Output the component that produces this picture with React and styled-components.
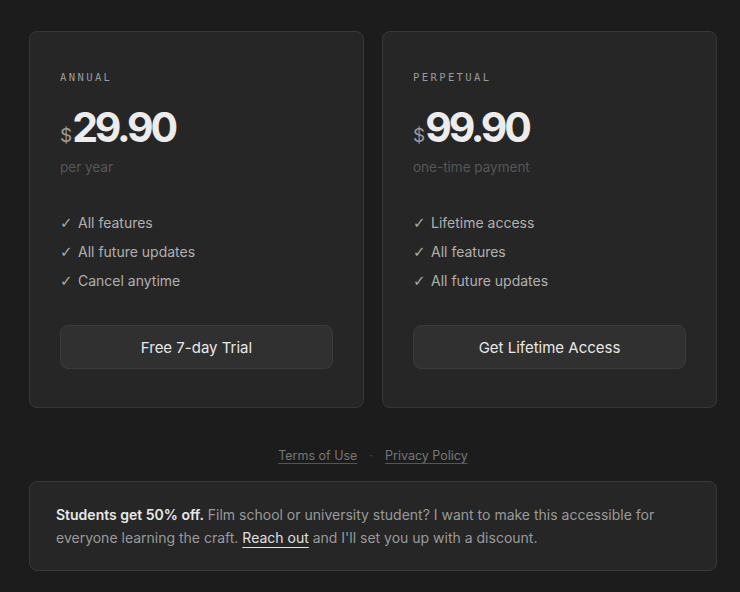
import styled, { createGlobalStyle } from "styled-components";

const GlobalStyle = createGlobalStyle`
  html, body {
    margin: 0;
    padding: 0;
    background: #1c1c1c;
  }
  body {
    font-family: Inter, "Noto Sans", sans-serif;
    color: #e6e6e6;
    -webkit-font-smoothing: antialiased;
  }
`;

const Page = styled.div`
  width: 688px;
  padding: 31px 0 22px 29px;
`;

const Plans = styled.div`
  display: grid;
  grid-template-columns: 1fr 1fr;
  gap: 18px;
`;

const Card = styled.div`
  display: flex;
  flex-direction: column;
  padding: 39px 30px 38px;
  background: #262626;
  border: 1px solid #383838;
  border-radius: 8px;
`;

const Label = styled.div`
  font-family: "DejaVu Sans Mono", "Liberation Mono", monospace;
  font-size: 10.5px;
  letter-spacing: 2.4px;
  color: #9a9a9a;
  line-height: 12px;
`;

const Price = styled.div`
  display: flex;
  align-items: baseline;
  margin-top: 19px;
  height: 50px;
`;

const Currency = styled.span`
  font-size: 19px;
  color: #9c9c9c;
  margin-right: 0;
`;

const Amount = styled.span`
  font-size: 41px;
  font-weight: 700;
  letter-spacing: -3.2px;
  color: #ececec;
`;

const Period = styled.div`
  margin-top: 7px;
  font-size: 13.5px;
  color: #575757;
`;

const Features = styled.ul`
  list-style: none;
  margin: 39px 0 0;
  padding: 0;
  display: flex;
  flex-direction: column;
  gap: 11px;
`;

const Feature = styled.li`
  display: flex;
  align-items: center;
  gap: 8px;
  font-size: 14px;
  line-height: 18px;
  color: #b0b0b0;
`;

const Check = styled.span`
  width: 10px;
  font-family: "DejaVu Sans", sans-serif;
  font-size: 15px;
  color: #a8a8a8;
`;

const Button = styled.button`
  margin-top: 35px;
  height: 44px;
  border-radius: 8px;
  border: 1px solid #3b3b3b;
  background: #303030;
  color: #e8e8e8;
  font-family: inherit;
  font-size: 15px;
  font-weight: 400;
`;

const Links = styled.div`
  display: flex;
  justify-content: center;
  align-items: center;
  gap: 12px;
  margin-top: 40px;
  font-size: 12.5px;
  color: #6e6e6e;
`;

const FooterLink = styled.a`
  color: #767676;
  text-decoration: underline;
  text-decoration-color: #555;
  text-underline-offset: 3px;
`;

const Dot = styled.span`
  color: #4a4a4a;
`;

const Students = styled.div`
  margin-top: 18px;
  padding: 21px 26px 21px;
  background: #262626;
  border: 1px solid #383838;
  border-radius: 8px;
  font-size: 14px;
  line-height: 23px;
  color: #9a9a9a;
`;

const Strong = styled.strong`
  color: #e8e8e8;
  font-weight: 600;
`;

const Reach = styled.a`
  color: #e0e0e0;
  text-decoration: underline;
  text-underline-offset: 4px;
`;

const plans = [
  {
    label: "ANNUAL",
    amount: "29.90",
    period: "per year",
    features: ["All features", "All future updates", "Cancel anytime"],
    cta: "Free 7-day Trial",
  },
  {
    label: "PERPETUAL",
    amount: "99.90",
    period: "one-time payment",
    features: ["Lifetime access", "All features", "All future updates"],
    cta: "Get Lifetime Access",
  },
];

export default function App() {
  return (
    <>
      <GlobalStyle />
      <Page>
        <Plans>
          {plans.map((plan) => (
            <Card key={plan.label}>
              <Label>{plan.label}</Label>
              <Price>
                <Currency>$</Currency>
                <Amount>{plan.amount}</Amount>
              </Price>
              <Period>{plan.period}</Period>
              <Features>
                {plan.features.map((f) => (
                  <Feature key={f}>
                    <Check>✓</Check>
                    {f}
                  </Feature>
                ))}
              </Features>
              <Button>{plan.cta}</Button>
            </Card>
          ))}
        </Plans>
        <Links>
          <FooterLink>Terms of Use</FooterLink>
          <Dot>·</Dot>
          <FooterLink>Privacy Policy</FooterLink>
        </Links>
        <Students>
          <Strong>Students get 50% off.</Strong> Film school or university
          student? I want to make this accessible for everyone learning the
          craft. <Reach>Reach out</Reach> and I'll set you up with a discount.
        </Students>
      </Page>
    </>
  );
}
